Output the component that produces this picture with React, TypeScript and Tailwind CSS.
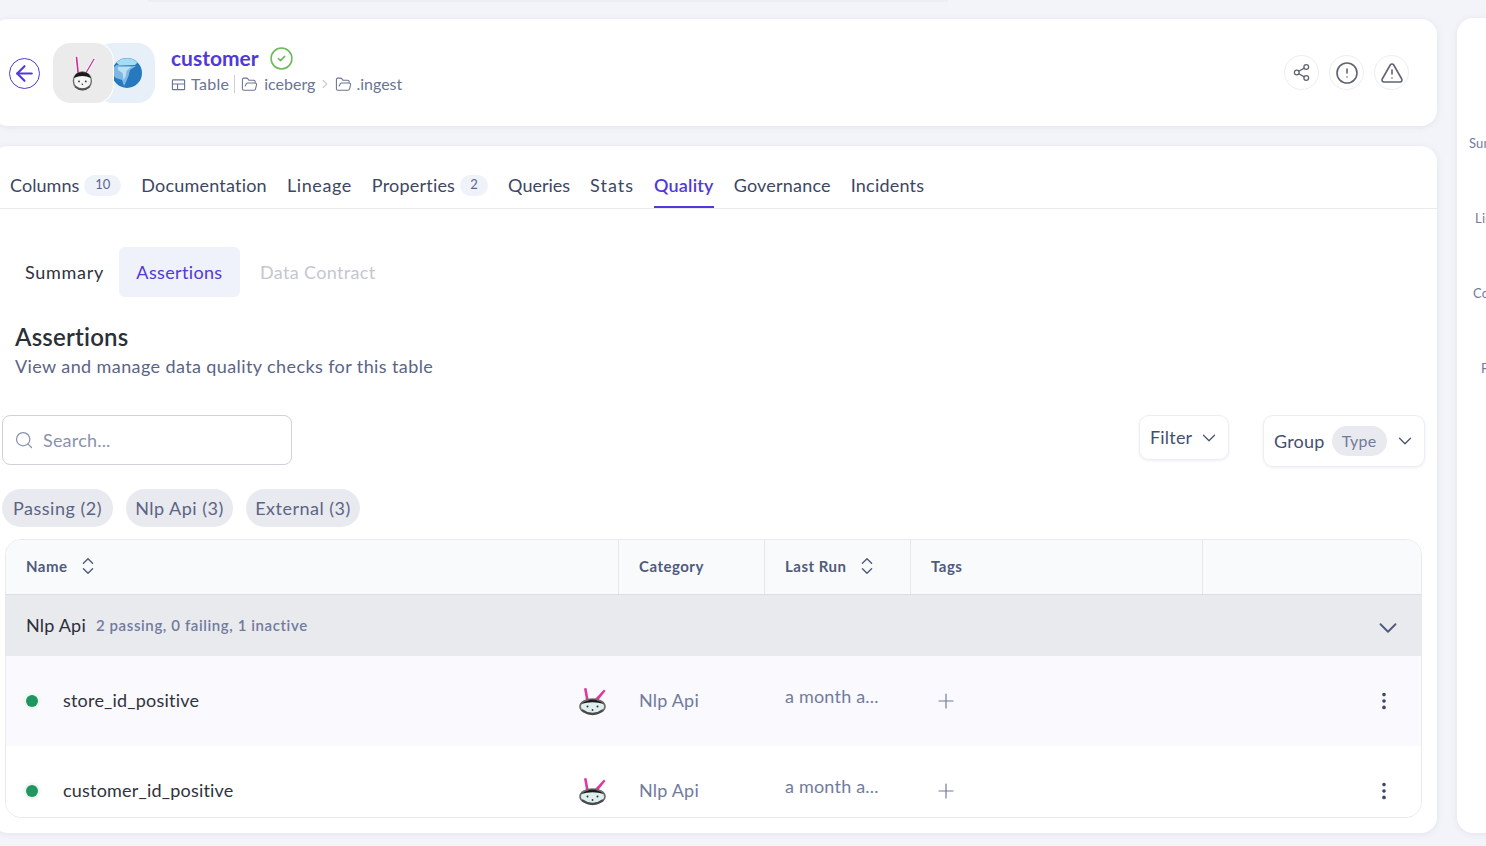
import { ArrowLeft, ChevronDown, ChevronRight, ChevronsUpDown, CircleAlert, CircleCheck, EllipsisVertical, FolderOpen, Plus, Search, Share2, TriangleAlert } from "lucide-react";

const font = { fontFamily: "Lato, 'Noto Sans', sans-serif" };

// small logo used in the table rows: wide pot with two ears
function Bunny({ className }: { className?: string }) {
  return (
    <svg viewBox="0 0 30 30" className={className}>
      <path d="M6 2.5 L8.5 2 L10.5 13 L8 14 Z" fill="#e0379f" />
      <path d="M17 13 L26 3.5 L27.5 5 L20 14.5 Z" fill="#e0379f" />
      <ellipse cx="14.5" cy="20.5" rx="12.5" ry="7.5" fill="#dfeeee" stroke="#6b6b6b" strokeWidth="1.6" />
      <path d="M3 18 Q14.5 9 26 18 Q14.5 14.5 3 18 Z" fill="#1d1d1d" />
      <path d="M4 24 Q14.5 32 25 24" fill="none" stroke="#4a4a4a" strokeWidth="2.2" />
      <circle cx="9.5" cy="20.5" r="1" fill="#333" />
      <circle cx="19.5" cy="20.5" r="1" fill="#333" />
      <circle cx="14.5" cy="24" r="0.9" fill="#333" />
    </svg>
  );
}

// bigger variant in the header tile: round head and long ears
function BunnyHead({ className }: { className?: string }) {
  return (
    <svg viewBox="0 0 24 32" className={className}>
      <path d="M4 1 L7 1 L8.5 17 L6 17 Z" fill="#fff" />
      <path d="M5 1.5 L6.5 1.5 L8 16.5 L6.5 16.5 Z" fill="#cf2f92" />
      <path d="M21 2 L23 3 L15 17 L12.5 16 Z" fill="#fff" />
      <path d="M21 3 L22 3.5 L14.5 16.5 L13.5 16 Z" fill="#cf2f92" />
      <circle cx="11" cy="23" r="8" fill="#f4f6f5" stroke="#6a6a6a" strokeWidth="1.2" />
      <path d="M3.5 20.5 Q5 15 11 15 Q17 15 18.5 20.5 Q11 16.8 3.5 20.5 Z" fill="#1b1b1b" />
      <path d="M4.5 28 Q11 33 17.5 28" fill="none" stroke="#555" strokeWidth="1.8" />
      <circle cx="8" cy="23.5" r="0.8" fill="#333" />
      <circle cx="14" cy="23.5" r="0.8" fill="#333" />
      <circle cx="11" cy="26" r="0.7" fill="#333" />
    </svg>
  );
}

function Iceberg({ className }: { className?: string }) {
  return (
    <svg viewBox="0 0 30 30" className={className}>
      <circle cx="15" cy="15" r="15" fill="#2678bf" />
      <path d="M4.5 4.5 A15 15 0 0 1 25.5 4.5 L23 7 L7 7 Z" fill="#a5dcf2" />
      <path d="M0.5 10 L5 7 L24 8 L18 12 L16.5 18 L14 24 L12 28 L10 22 L4 20 L0.5 17 Z" fill="#7db8e2" />
      <path d="M6 9 L19 9 L14.5 13 L13.5 19 L11.5 22 L10.5 15 L6 12 Z" fill="#bcdff3" />
    </svg>
  );
}

function TableIcon({ className }: { className?: string }) {
  return (
    <svg viewBox="0 0 16 16" fill="none" stroke="currentColor" strokeWidth="1.2" className={className}>
      <rect x="1.5" y="3" width="13" height="10.5" rx="0.8" />
      <path d="M1.5 7.5 H14.5 M7 7.5 V13.5" />
    </svg>
  );
}

function Tab({ label, count, active, className = "" }: { label: string; count?: number; active?: boolean; className?: string }) {
  return (
    <div className={`flex h-[48px] items-center gap-[5px] border-b-2 pt-[4px] text-[18px] ${active ? "border-[#5138d8] font-semibold text-[#5138d8]" : "border-transparent text-[#3d4663]"} ${className}`}>
      {label}
      {count !== undefined && (
        <span className={`flex h-[21px] items-center justify-center rounded-full bg-[#f0f2fa] text-[13px] text-[#5b6690] ${count > 9 ? "w-[37px]" : "w-[28px]"}`}>{count}</span>
      )}
    </div>
  );
}

function Chip({ label, w }: { label: string; w: string }) {
  return <div className={`flex h-[38px] items-center justify-center rounded-full bg-[#e9eaef] text-[18px] tracking-[0.5px] text-[#5b6485] ${w}`}>{label}</div>;
}

function HeadCell({ label, sort, border = true }: { label?: string; sort?: boolean; border?: boolean }) {
  return (
    <div className={`flex items-center gap-[9px] pb-[2px] pl-[20px] text-[15px] font-bold tracking-[0.5px] text-[#505a7c] ${border ? "border-r border-[#e6e7ec]" : ""}`}>
      {label}
      {sort && <ChevronsUpDown className="h-[22px] w-[22px] text-[#505a7c]" strokeWidth={1.5} />}
    </div>
  );
}

function Row({ name, tinted }: { name: string; tinted?: boolean }) {
  return (
    <div className={`grid h-[90px] shrink-0 grid-cols-[613px_146px_146px_292px_1fr] items-center ${tinted ? "bg-[#f9f9fe]" : "bg-white"}`}>
      <div className="flex items-center pl-[20px] pr-[11px]">
        <span className="h-[12px] w-[12px] rounded-full bg-[#1f9560] ring-[3px] ring-[#f1f8f4]" />
        <span className="ml-[25px] flex-1 pb-[2px] text-[18px] text-[#2f333d]">{name}</span>
        <Bunny className="h-[30px] w-[30px]" />
      </div>
      <div className="pb-[2px] pl-[20px] text-[18px] text-[#717b9d]">Nlp Api</div>
      <div className="-mt-[10px] pl-[20px] text-[18px] text-[#717b9d]">a month a...</div>
      <div className="pl-[23px]">
        <Plus className="h-[24px] w-[24px] text-[#717b9d]" strokeWidth={1.2} />
      </div>
      <div className="flex justify-end pr-[26px]">
        <EllipsisVertical className="h-[22px] w-[22px] text-[#3d4663]" strokeWidth={2} />
      </div>
    </div>
  );
}

export default function App() {
  return (
    <div className="relative flex h-[846px] w-[1486px] gap-[20px] overflow-hidden bg-[#f3f4f9] tracking-[0.2px]" style={font}>
      {/* edge of the card scrolled out above */}
      <div className="absolute left-[148px] top-0 h-[2px] w-[800px] bg-[#eceef3]" />

      <div className="-ml-[8px] flex w-[1445px] shrink-0 flex-col gap-[20px] pt-[19px]">
        {/* header card */}
        <section className="flex h-[107px] items-center rounded-[16px] bg-white pl-[17px] pr-[28px] shadow-[0_1px_6px_rgba(80,90,140,0.10)]">
          <div className="mt-[2px] flex h-[31px] w-[31px] items-center justify-center rounded-full border border-[#5138d8] text-[#5138d8]">
            <ArrowLeft className="h-[25px] w-[25px]" strokeWidth={2} />
          </div>
          <div className="relative ml-[13px] h-[60px] w-[102px]">
            <div className="absolute right-0 top-0 flex h-[60px] w-[60px] items-center justify-end rounded-[18px] bg-[#e7f0f8] pr-[13px]">
              <Iceberg className="h-[30px] w-[30px]" />
            </div>
            <div className="absolute left-0 top-0 flex h-[60px] w-[60px] items-center justify-center rounded-[18px] bg-[#ebebeb] ring-1 ring-white">
              <BunnyHead className="h-[36px] w-[27px]" />
            </div>
          </div>
          <div className="mb-[6px] ml-[16px] flex flex-col tracking-normal">
            <div className="flex items-center gap-[10px]">
              <span className="text-[21px] font-bold leading-[28px] text-[#5138d8]">customer</span>
              <CircleCheck className="h-[25px] w-[25px] text-[#6db85a]" strokeWidth={1.5} />
            </div>
            <div className="mt-[1px] flex items-center text-[16px] leading-[22px] text-[#6a7494]">
              <TableIcon className="h-[15px] w-[15px]" />
              <span className="ml-[5px] tracking-[0.3px]">Table</span>
              <span className="ml-[5px] h-[18px] w-[1px] bg-[#c9ccdb]" />
              <FolderOpen className="ml-[6px] h-[17px] w-[17px]" strokeWidth={1.5} />
              <span className="ml-[6px]">iceberg</span>
              <ChevronRight className="ml-[3px] h-[14px] w-[14px] text-[#c9ccdb]" />
              <FolderOpen className="ml-[3px] h-[17px] w-[17px]" strokeWidth={1.5} />
              <span className="ml-[4px]">.ingest</span>
            </div>
          </div>
          <div className="ml-auto flex gap-[10px] text-[#5f6470]">
            <div className="flex h-[35px] w-[35px] items-center justify-center rounded-full border border-[#eeeeee]"><Share2 className="h-[19px] w-[19px]" strokeWidth={1.6} /></div>
            <div className="flex h-[35px] w-[35px] items-center justify-center rounded-full border border-[#eeeeee]"><CircleAlert className="h-[24px] w-[24px]" strokeWidth={1.6} /></div>
            <div className="flex h-[35px] w-[35px] items-center justify-center rounded-full border border-[#eeeeee]"><TriangleAlert className="h-[24px] w-[24px]" strokeWidth={1.6} /></div>
          </div>
        </section>

        {/* main card */}
        <section className="flex h-[687px] flex-col rounded-[16px] bg-white shadow-[0_1px_6px_rgba(80,90,140,0.10)]">
          <div className="flex h-[63px] items-end gap-[20px] border-b border-[#e9eaef] pl-[18px]">
            <Tab label="Columns" count={10} className="tracking-[0.05px]" />
            <Tab label="Documentation" />
            <Tab label="Lineage" className="tracking-[0.6px]" />
            <Tab label="Properties" count={2} />
            <Tab label="Queries" className="tracking-normal" />
            <Tab label="Stats" className="tracking-[1px]" />
            <Tab label="Quality" active />
            <Tab label="Governance" />
            <Tab label="Incidents" />
          </div>

          <div className="mt-[38px] flex h-[50px] items-center pl-[33px] text-[18px] tracking-[0.35px]">
            <span className="tracking-[0.7px] text-[#2f333d]">Summary</span>
            <span className="ml-[15px] flex h-[50px] w-[121px] items-center justify-center rounded-[6px] bg-[#f0f2fb] text-[#5138d8]">Assertions</span>
            <span className="ml-[20px] text-[#c4c7d0]">Data Contract</span>
          </div>

          <h1 className="mt-[24px] pl-[23px] text-[24px] font-semibold leading-[32px] text-[#2b2f38]">Assertions</h1>
          <p className="pl-[23px] text-[18px] leading-[26px] tracking-[0.4px] text-[#5b6485]">View and manage data quality checks for this table</p>

          <div className="mt-[36px] flex items-start pl-[10px] pr-[12px]">
            <div className="flex h-[50px] w-[290px] items-center rounded-[8px] border border-[#cfd1de] pl-[11px] text-[18px] text-[#8a92ad]">
              <Search className="h-[20px] w-[20px]" strokeWidth={1.5} />
              <span className="ml-[9px]">Search...</span>
            </div>
            <div className="ml-auto flex h-[45px] w-[90px] items-center justify-between rounded-[10px] border border-[#eceef4] pl-[10px] pr-[8px] text-[18px] text-[#45506f] shadow-[0_1px_3px_rgba(80,90,140,0.10)]">
              Filter
              <ChevronDown className="h-[22px] w-[22px]" strokeWidth={1.3} />
            </div>
            <div className="ml-[34px] flex h-[52px] w-[162px] items-center rounded-[10px] border border-[#eceef4] pl-[10px] text-[18px] text-[#45506f] shadow-[0_1px_3px_rgba(80,90,140,0.10)]">
              Group
              <span className="ml-[7px] flex h-[30px] w-[55px] items-center justify-center rounded-full bg-[#e9eaef] text-[16px] text-[#717b9d]">Type</span>
              <ChevronDown className="ml-[7px] h-[22px] w-[22px]" strokeWidth={1.3} />
            </div>
          </div>

          <div className="mt-[22px] flex gap-[13px] pl-[10px]">
            <Chip label="Passing (2)" w="w-[111px]" />
            <Chip label="Nlp Api (3)" w="w-[107px]" />
            <Chip label="External (3)" w="w-[114px]" />
          </div>

          <div className="ml-[13px] mt-[12px] flex h-[279px] w-[1417px] flex-col overflow-hidden rounded-[16px] border border-[#e9eaef]">
            <div className="grid h-[55px] shrink-0 grid-cols-[613px_146px_146px_292px_1fr] border-b border-[#dcdde3] bg-[#f9fafc]">
              <HeadCell label="Name" sort />
              <HeadCell label="Category" />
              <HeadCell label="Last Run" sort />
              <HeadCell label="Tags" />
              <HeadCell border={false} />
            </div>
            <div className="flex h-[61px] shrink-0 items-center bg-[#e9eaee] pl-[20px] pr-[18px]">
              <span className="pb-[1px] text-[18px] text-[#2b2f38]">Nlp Api</span>
              <span className="ml-[10px] pb-[1px] text-[15px] font-semibold tracking-[0.6px] text-[#717b9d]">2 passing, 0 failing, 1 inactive</span>
              <ChevronDown className="ml-auto mt-[4px] h-[30px] w-[30px] text-[#505a7c]" strokeWidth={1.5} />
            </div>
            <Row name="store_id_positive" tinted />
            <Row name="customer_id_positive" />
          </div>
        </section>
      </div>

      {/* right panel, cut off by the window */}
      <aside className="mt-[18px] flex h-[815px] w-[200px] shrink-0 flex-col rounded-l-[16px] bg-white pl-[12px] text-[13px] text-[#717b9d] shadow-[0_1px_6px_rgba(80,90,140,0.10)]">
        <span className="mt-[116px]">Summary</span>
        <span className="ml-[6px] mt-[55px]">Lineage</span>
        <span className="ml-[4px] mt-[56px]">Columns</span>
        <span className="ml-[12px] mt-[55px]">Freshness</span>
      </aside>
    </div>
  );
}
